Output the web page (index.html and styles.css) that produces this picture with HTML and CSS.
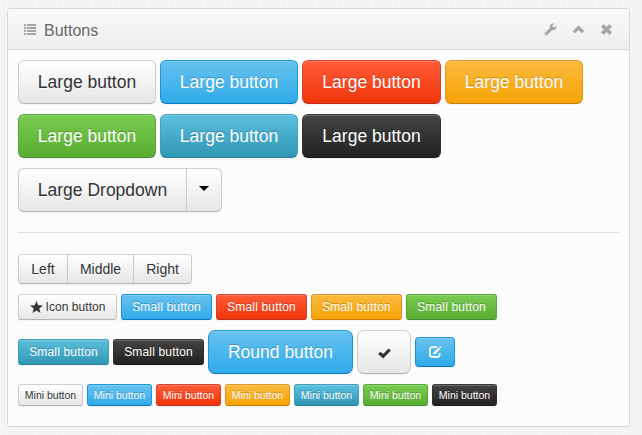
FILE: index.html
```html
<!DOCTYPE html>
<html lang="en">
<head>
<meta charset="utf-8">
<title>Buttons</title>
<link rel="stylesheet" href="styles.css">
</head>
<body>
<section class="box">
  <header class="box-header">
    <svg class="icon-list" width="12" height="11" viewBox="0 0 12 11"><path d="M0 0h2v2H0zM3 0h9v2H3zM0 3h2v2H0zM3 3h9v2H3zM0 6h2v2H0zM3 6h9v2H3zM0 9h2v2H0zM3 9h9v2H3z"/></svg>
    <h2>Buttons</h2>
    <nav class="box-tools">
      <svg width="13" height="13" viewBox="0 0 13 13"><path d="M12.200 3.100 9.900 4.400 8.500 3.600V2.300L10.600.9C8.700-.2 6 1 5.800 3.500c0 .5.1 1 .2 1.400L.8 10c-.5.5-.5 1.200 0 1.700l.5.5c.5.5 1.200.5 1.700 0L8.100 7c2.400.8 4.500-1.100 4.300-3.300zM2.100 10.300a.6.6 0 1 1 0 1.200.6.6 0 0 1 0-1.200z" fill-rule="evenodd"/></svg>
      <svg width="13" height="13" viewBox="0 0 13 13"><path d="M6.500 2.400 12.200 8.100 10 10.300 6.500 7 3 10.300.8 8.100z"/></svg>
      <svg width="13" height="13" viewBox="0 0 13 13"><path d="M3.600 1.500 6.500 4.200 9.400 1.500 11.600 3.700 8.900 6.500 11.600 9.300 9.400 11.500 6.500 8.800 3.600 11.500 1.400 9.300 4.100 6.500 1.400 3.700z" stroke="#a5a5a5" stroke-width=".8" stroke-linejoin="round"/></svg>
    </nav>
  </header>
  <div class="box-content">
    <div class="row">
      <button class="btn large">Large button</button>
      <button class="btn large primary">Large button</button>
      <button class="btn large wide danger">Large button</button>
      <button class="btn large warning">Large button</button>
    </div>
    <div class="row">
      <button class="btn large success">Large button</button>
      <button class="btn large info">Large button</button>
      <button class="btn large wide inverse">Large button</button>
    </div>
    <div class="row group">
      <button class="btn large dropdown">Large Dropdown</button>
      <button class="btn large toggle" aria-label="Toggle dropdown"><span class="caret"></span></button>
    </div>
    <hr>
    <div class="row group">
      <button class="btn left">Left</button>
      <button class="btn middle">Middle</button>
      <button class="btn right">Right</button>
    </div>
    <div class="row">
      <button class="btn small with-icon"><svg width="13" height="12" viewBox="0 0 13 12"><path d="M6.500 0 8.200 4.200 13 4.500 9.300 7.400 10.500 12 6.500 9.400 2.500 12 3.700 7.400 0 4.500 4.800 4.200z"/></svg><span>Icon button</span></button>
      <button class="btn small primary">Small button</button>
      <button class="btn small danger">Small button</button>
      <button class="btn small warning">Small button</button>
      <button class="btn small success">Small button</button>
    </div>
    <div class="row">
      <button class="btn small info">Small button</button>
      <button class="btn small inverse">Small button</button>
      <button class="btn large round primary">Round button</button>
      <button class="btn large round check" aria-label="Confirm"><svg width="13" height="11" viewBox="0 0 13 11"><path d="M10.600.4 12.900 2.600 5.200 10.400.1 6 2.300 3.800 5.100 5.900z"/></svg></button>
      <button class="btn edit primary" aria-label="Edit"><svg width="13" height="12" viewBox="0 0 13 12"><path d="M8 1.200H3A2.100 2.100 0 0 0 .9 3.300v5.500A2.100 2.100 0 0 0 3 10.900h5.500a2.100 2.100 0 0 0 2.100-2.100V7.200" fill="none" stroke="#fff" stroke-width="1.700"/><path d="M9.600 1.400 11.200 3 6.500 7.900 4.100 8.500 4.700 6.200zM10.300.7l.5-.5c.2-.2.500-.2.700 0l.8.800c.2.200.2.500 0 .7l-.5.500z"/></svg></button>
    </div>
    <div class="row">
      <button class="btn mini">Mini button</button>
      <button class="btn mini primary">Mini button</button>
      <button class="btn mini danger">Mini button</button>
      <button class="btn mini warning">Mini button</button>
      <button class="btn mini info">Mini button</button>
      <button class="btn mini success">Mini button</button>
      <button class="btn mini inverse">Mini button</button>
    </div>
  </div>
</section>
</body>
</html>
```

FILE: styles.css
```css
* { box-sizing: border-box; }
body {
  margin: 0;
  padding: 8px 12px 8px 7px;
  background-color: #f2f3f5;
  background-image:
    repeating-linear-gradient(90deg, rgba(255,255,255,.2) 0 1px, transparent 1px 4px, rgba(225,228,234,.12) 4px 5px, transparent 5px 7px),
    repeating-linear-gradient(0deg, rgba(255,255,255,.2) 0 1px, transparent 1px 5px);
  font-family: "Liberation Sans", Arial, sans-serif;
  color: #333;
}
.box {
  height: 419px;
  border: 1px solid #d9d9d9;
  border-radius: 3px;
  background: #fcfcfc;
}
.box-header {
  display: flex;
  align-items: center;
  height: 41px;
  padding: 0 16px;
  border-bottom: 1px solid #d9d9d9;
  border-radius: 2px 2px 0 0;
  background: linear-gradient(#fafafa, #ededed);
}
.icon-list { fill: #a5a5a5; }
.box-header h2 {
  margin: 3px 0 0 8px;
  font-size: 16px;
  font-weight: 400;
  line-height: 20px;
  color: #666;
  text-shadow: 0 1px 0 #fff;
}
.box-tools { display: flex; gap: 15px; margin-left: auto; }
.box-tools svg { fill: #a5a5a5; }
.box-content {
  display: flex;
  flex-direction: column;
  gap: 10px;
  padding: 10px;
}
.row { display: flex; align-items: center; gap: 4px; }
.group { gap: 0; }
hr {
  width: 100%;
  height: 1px;
  margin: 10px 0 11px;
  border: 0;
  background: #dedede;
}
.btn {
  display: flex;
  align-items: center;
  justify-content: center;
  height: 30px;
  padding: 0;
  border: 1px solid #ccc;
  border-color: #d0d0d0 #cbcbcb #b3b3b3;
  border-radius: 4px;
  background: linear-gradient(#fff, #e6e6e6);
  box-shadow: inset 0 1px 0 rgba(255,255,255,.2), 0 1px 2px rgba(0,0,0,.05);
  font: 14px/20px "Liberation Sans", Arial, sans-serif;
  color: #333;
  text-shadow: 0 1px 1px rgba(255,255,255,.75);
  white-space: nowrap;
}
.btn svg { fill: #333; }
.large { width: 138px; height: 44px; border-radius: 6px; font-size: 17.500px; }
.wide { width: 139px; }
.small { width: 91px; height: 26px; border-radius: 3px; font-size: 12px; letter-spacing: .17px; }
.mini { width: 65px; height: 22px; border-radius: 3px; font-size: 10.500px; }
.primary, .danger, .warning, .success, .info, .inverse {
  color: #fff;
  text-shadow: 0 -1px 0 rgba(0,0,0,.25);
}
.primary { border-color: #1c96da #1c96da #0877bb; background: linear-gradient(#67c2ef, #2fabe9); }
.danger { border-color: #d34332 #d34332 #bf2c1c; background: linear-gradient(#ff5c38, #f0350b); }
.warning { border-color: #df9724 #df9724 #c48010; background: linear-gradient(#fabb3d, #f6a306); }
.success { border-color: #57a63a #57a63a #408c2f; background: linear-gradient(#79cb51, #59ad33); }
.info { border-color: #419fb9 #419fb9 #2a819d; background: linear-gradient(#5bc0de, #2f96b4); }
.inverse { border-color: #3a3a3a #303030 #1c1c1c; background: linear-gradient(#444, #222); }
.btn.dropdown { width: 169px; border-radius: 6px 0 0 6px; }
.btn.toggle { width: 36px; margin-left: -1px; border-radius: 0 6px 6px 0; }
.caret {
  border: 5px solid transparent;
  border-top-color: #000;
  border-bottom: 0;
  margin-top: -4px;
}
.left { width: 50px; border-radius: 4px 0 0 4px; }
.middle { width: 67px; margin-left: -1px; border-radius: 0; }
.right { width: 59px; margin-left: -1px; border-radius: 0 4px 4px 0; }
.with-icon { width: 99px; gap: 3px; letter-spacing: .05px; }
.round { width: 145px; border-radius: 7px; }
.check { width: 54px; }
.check svg { margin-top: 3px; }
.edit { width: 40px; }
.edit svg { fill: #fff; }
```
